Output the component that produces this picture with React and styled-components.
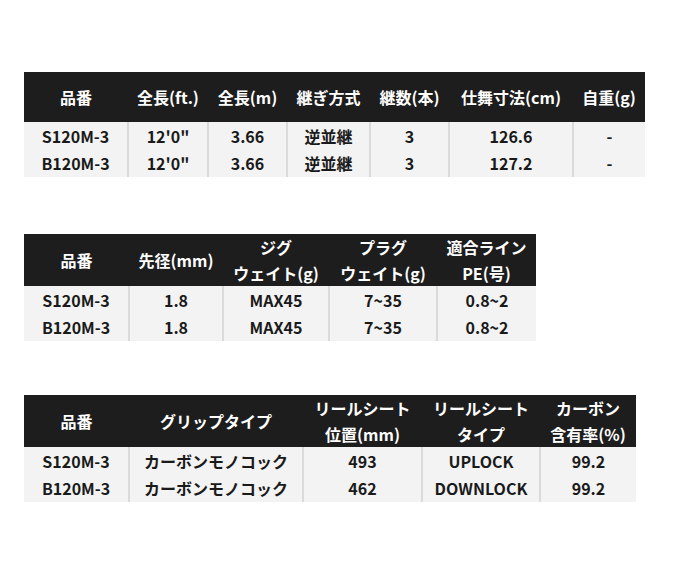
import React from "react";
import styled, { createGlobalStyle } from "styled-components";

const Global = createGlobalStyle`
  html, body { margin: 0; padding: 0; background: #ffffff; }
  body { font-family: "Noto Sans CJK JP", "Noto Sans", sans-serif; }
`;

const Page = styled.div`
  display: flex;
  flex-direction: column;
  align-items: flex-start;
  padding: 72px 0 0 24px;
`;

const Table = styled.table`
  border-collapse: collapse;
  table-layout: fixed;
  margin-top: ${(p) => p.$mt || 0}px;
  font-family: "Noto Sans CJK JP", "Noto Sans", sans-serif;
  font-weight: 700;
  font-size: 16px;
`;

const Col = styled.col`
  width: ${(p) => p.$w}px;
`;

const HeadRow = styled.tr`
  height: ${(p) => p.$h}px;
  background: #1d1d1d;
`;

const Th = styled.th`
  color: #ffffff;
  font-weight: 700;
  font-size: 16px;
  line-height: 26px;
  padding: 0;
  text-align: center;
  vertical-align: middle;
  white-space: nowrap;
`;

const BodyRow = styled.tr`
  height: ${(p) => p.$h}px;
  background: #f3f3f3;
`;

const Td = styled.td`
  color: #1a1a1a;
  font-weight: 700;
  font-size: 16px;
  line-height: 20px;
  padding: 0;
  text-align: center;
  vertical-align: middle;
  white-space: nowrap;
  & + & {
    border-left: 2px solid #dadada;
  }
`;

const tables = [
  {
    mt: 0,
    cols: [104, 80, 79, 83, 79, 124, 72],
    headH: 50,
    head: [["品番"], ["全長(ft.)"], ["全長(m)"], ["継ぎ方式"], ["継数(本)"], ["仕舞寸法(cm)"], ["自重(g)"]],
    rows: [
      ["S120M-3", "12'0\"", "3.66", "逆並継", "3", "126.6", "-"],
      ["B120M-3", "12'0\"", "3.66", "逆並継", "3", "127.2", "-"],
    ],
  },
  {
    mt: 57,
    cols: [105, 94, 106, 108, 99],
    headH: 51,
    head: [["品番"], ["先径(mm)"], ["ジグ", "ウェイト(g)"], ["プラグ", "ウェイト(g)"], ["適合ライン", "PE(号)"]],
    rows: [
      ["S120M-3", "1.8", "MAX45", "7~35", "0.8~2"],
      ["B120M-3", "1.8", "MAX45", "7~35", "0.8~2"],
    ],
  },
  {
    mt: 54,
    cols: [105, 174, 119, 118, 96],
    headH: 52,
    head: [["品番"], ["グリップタイプ"], ["リールシート", "位置(mm)"], ["リールシート", "タイプ"], ["カーボン", "含有率(%)"]],
    rows: [
      ["S120M-3", "カーボンモノコック", "493", "UPLOCK", "99.2"],
      ["B120M-3", "カーボンモノコック", "462", "DOWNLOCK", "99.2"],
    ],
  },
];

function SpecTable({ t }) {
  return (
    <Table $mt={t.mt}>
      <colgroup>
        {t.cols.map((w, i) => (
          <Col key={i} $w={w} />
        ))}
      </colgroup>
      <thead>
        <HeadRow $h={t.headH}>
          {t.head.map((lines, i) => (
            <Th key={i}>
              {lines.map((l, j) => (
                <React.Fragment key={j}>
                  {j > 0 && <br />}
                  {l}
                </React.Fragment>
              ))}
            </Th>
          ))}
        </HeadRow>
      </thead>
      <tbody>
        {t.rows.map((r, i) => (
          <BodyRow key={i} $h={i === 0 ? 27 : 28}>
            {r.map((c, j) => (
              <Td key={j}>{c}</Td>
            ))}
          </BodyRow>
        ))}
      </tbody>
    </Table>
  );
}

export default function App() {
  return (
    <>
      <Global />
      <Page>
        {tables.map((t, i) => (
          <SpecTable key={i} t={t} />
        ))}
      </Page>
    </>
  );
}
